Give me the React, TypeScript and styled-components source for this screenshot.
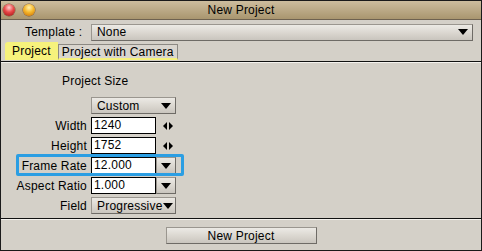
import React from "react";
import styled, { createGlobalStyle } from "styled-components";

const Global = createGlobalStyle`
  html, body { margin: 0; padding: 0; background: #d4d0c8; }
  * { box-sizing: border-box; }
  body { font-family: "Liberation Sans", Arial, sans-serif; font-size: 12px; letter-spacing: 0.2px; color: #000; }
`;

const Window = styled.div`
  width: 482px;
  height: 251px;
  border: 1px solid #1a1a1a;
  background: #d4d0c8;
  display: flex;
  flex-direction: column;
  overflow: hidden;
`;

const TitleBar = styled.div`
  height: 19px;
  flex: none;
  background: linear-gradient(#cdbd9e, #a9966f);
  border-bottom: 1px solid #6e6250;
  display: flex;
  align-items: center;
  position: relative;
  padding-left: 2px;
  gap: 8px;
`;

const Light = styled.div<{ $c1: string; $c2: string; $c3: string }>`
  width: 12px;
  height: 12px;
  border-radius: 50%;
  background: radial-gradient(circle at 50% 30%, ${(p) => p.$c1} 0%, ${(p) => p.$c2} 45%, ${(p) => p.$c3} 100%);
  box-shadow: 0 0 0 0.5px rgba(80, 40, 20, 0.6);
`;

const Title = styled.div`
  position: absolute;
  left: 0;
  right: 0;
  text-align: center;
  line-height: 19px;
`;

const TemplateRow = styled.div`
  display: flex;
  align-items: center;
  height: 20px;
  margin-top: 2px;
  padding-left: 24px;
  gap: 6px;
`;

const Label = styled.span`
  width: 60px;
  white-space: nowrap;
`;

const Select = styled.div<{ $w: number }>`
  width: ${(p) => p.$w}px;
  height: 17px;
  display: flex;
  align-items: center;
  justify-content: space-between;
  padding: 0 4px 0 5px;
  background: linear-gradient(#eceae5, #d8d4cd 60%, #c9c5be);
  border: 1px solid #9a968f;
  border-right-color: #6e6b66;
  border-bottom-color: #6e6b66;
  white-space: nowrap;
`;

const Arrow = styled.span`
  width: 0;
  height: 0;
  border-left: 5px solid transparent;
  border-right: 5px solid transparent;
  border-top: 6px solid #000;
  flex: none;
`;

const Tabs = styled.div`
  display: flex;
  align-items: flex-end;
  padding-left: 4px;
  height: 19px;
`;

const Tab = styled.div<{ $active?: boolean }>`
  height: ${(p) => (p.$active ? 18 : 16)}px;
  padding: 0 ${(p) => (p.$active ? 6 : 3)}px;
  display: flex;
  align-items: center;
  white-space: nowrap;
  background: ${(p) => (p.$active ? "#f6f27c" : "#d9d5ce")};
  border: ${(p) => (p.$active ? "1px solid #f6f27c" : "1px solid #8c8983")};
  border-bottom: 2px solid #f6f27c;
  border-top-left-radius: ${(p) => (p.$active ? 3 : 0)}px;
  margin-bottom: 1px;
`;

const Separator = styled.div`
  height: 2px;
  flex: none;
  border-top: 1px solid #111;
  border-bottom: 1px solid #f4f2ee;
`;

const Panel = styled.div`
  flex: 1;
  display: flex;
  flex-direction: column;
  padding-top: 10px;
`;

const Heading = styled.div`
  padding-left: 61px;
  height: 16px;
  line-height: 16px;
  margin-bottom: 8px;
`;

const Rows = styled.div`
  display: flex;
  flex-direction: column;
  gap: 3px;
`;

const Row = styled.div`
  display: flex;
  align-items: center;
  height: 17px;
  gap: 4px;
  position: relative;
`;

const RowLabel = styled.div`
  width: 86px;
  text-align: right;
  white-space: nowrap;
`;

const Input = styled.div`
  width: 65px;
  height: 17px;
  background: #fff;
  border: 1px solid #000;
  padding-left: 2px;
  line-height: 15px;
`;

const Stepper = styled.svg`
  margin-left: 3px;
`;

const DropButton = styled.div`
  width: 20px;
  height: 17px;
  margin-left: -4px;
  background: linear-gradient(#eceae5, #d8d4cd 60%, #c9c5be);
  border: 1px solid #9a968f;
  border-right-color: #6e6b66;
  border-bottom-color: #6e6b66;
  display: flex;
  align-items: center;
  justify-content: center;
`;

const Focus = styled.div`
  position: absolute;
  left: 15px;
  top: -3px;
  width: 168px;
  height: 22px;
  border: 3px solid #2b9ee3;
  border-radius: 2px;
  pointer-events: none;
`;

const Footer = styled.div`
  height: 30px;
  flex: none;
  display: flex;
  justify-content: center;
  padding-top: 7px;
`;

const Button = styled.div`
  width: 151px;
  height: 17px;
  display: flex;
  align-items: center;
  justify-content: center;
  background: linear-gradient(#eceae5, #d8d4cd 60%, #c9c5be);
  border: 1px solid #9a968f;
  border-right-color: #6e6b66;
  border-bottom-color: #6e6b66;
`;

const StepIcon = () => (
  <Stepper width="10" height="8" viewBox="0 0 10 8">
    <polygon points="4,0 4,8 0,4" fill="#000" />
    <polygon points="6,0 6,8 10,4" fill="#000" />
  </Stepper>
);

export default function App() {
  return (
    <>
      <Global />
      <Window>
        <TitleBar>
          <Light $c1="#ffd0d0" $c2="#e94848" $c3="#9a1010" />
          <Light $c1="#fff3b0" $c2="#f6b82c" $c3="#c86a00" />
          <Title>New Project</Title>
        </TitleBar>
        <TemplateRow>
          <Label>Template :</Label>
          <Select $w={382}>
            <span>None</span>
            <Arrow />
          </Select>
        </TemplateRow>
        <Tabs>
          <Tab $active>Project</Tab>
          <Tab>Project with Camera</Tab>
        </Tabs>
        <Separator />
        <Panel>
          <Heading>Project Size</Heading>
          <Rows>
            <Row>
              <RowLabel />
              <Select $w={85}>
                <span>Custom</span>
                <Arrow />
              </Select>
            </Row>
            <Row>
              <RowLabel>Width</RowLabel>
              <Input>1240</Input>
              <StepIcon />
            </Row>
            <Row>
              <RowLabel>Height</RowLabel>
              <Input>1752</Input>
              <StepIcon />
            </Row>
            <Row>
              <RowLabel>Frame Rate</RowLabel>
              <Input>12.000</Input>
              <DropButton>
                <Arrow />
              </DropButton>
              <Focus />
            </Row>
            <Row>
              <RowLabel>Aspect Ratio</RowLabel>
              <Input>1.000</Input>
              <DropButton>
                <Arrow />
              </DropButton>
            </Row>
            <Row>
              <RowLabel>Field</RowLabel>
              <Select $w={85}>
                <span>Progressive</span>
                <Arrow />
              </Select>
            </Row>
          </Rows>
        </Panel>
        <Separator />
        <Footer>
          <Button>New Project</Button>
        </Footer>
      </Window>
    </>
  );
}
